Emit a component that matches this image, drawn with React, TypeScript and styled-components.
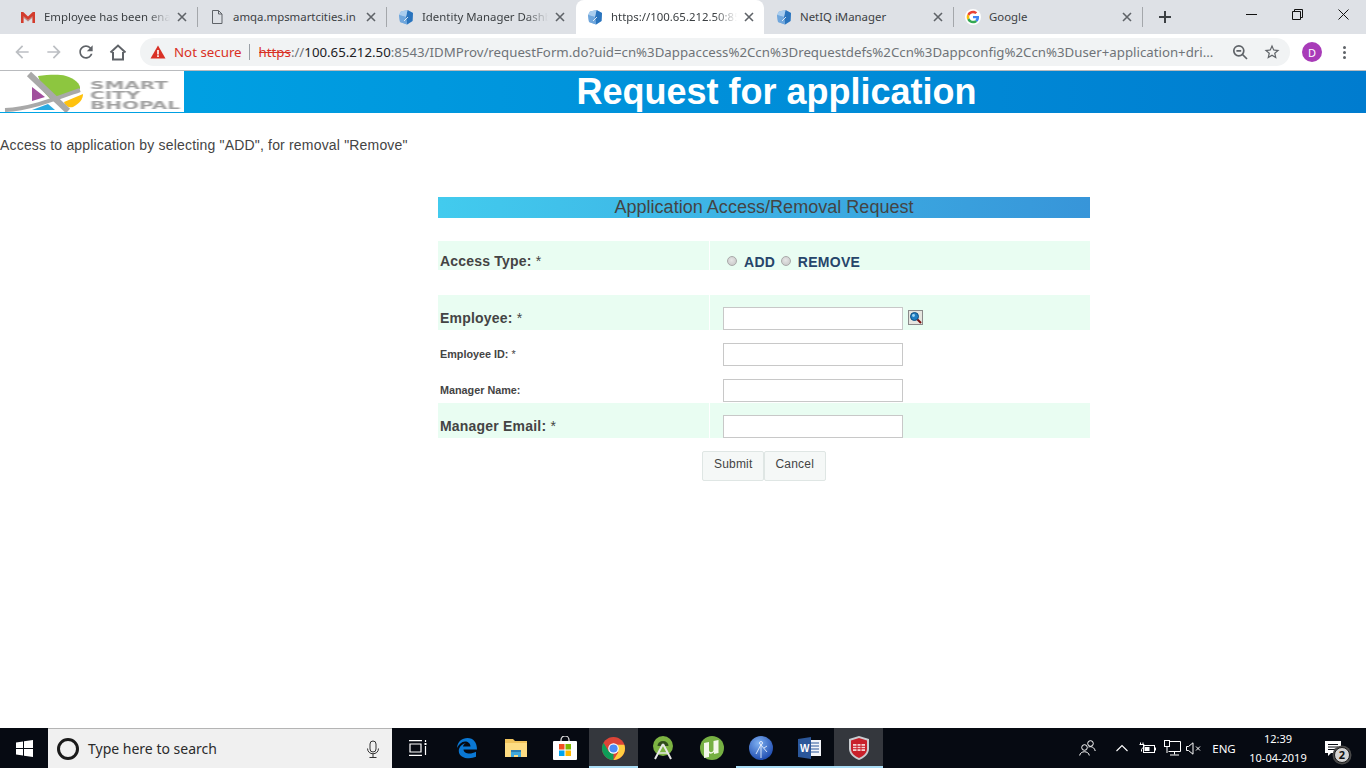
import React from "react";
import styled, { createGlobalStyle } from "styled-components";

const GlobalStyle = createGlobalStyle`
  html, body {
    margin: 0;
    padding: 0;
    background: #fff;
    font-family: "Liberation Sans", Arial, sans-serif;
  }
  * { box-sizing: border-box; }
`;

const Screen = styled.div`
  width: 1366px;
  height: 768px;
  overflow: hidden;
  display: flex;
  flex-direction: column;
`;

/* browser chrome */
const TabStrip = styled.div`
  height: 34px;
  flex: none;
  display: flex;
  align-items: stretch;
  padding: 0 0 0 9px;
  background: #dee1e6;
  font-family: "Noto Sans", "Open Sans", sans-serif;
`;

const Tab = styled.div<{ $active?: boolean }>`
  width: 188px;
  height: 34px;
  display: flex;
  align-items: center;
  padding: 0 9px 0 11px;
  border-radius: 8px 8px 0 0;
  background: ${({ $active }) => ($active ? "#fff" : "transparent")};
`;

const Favicon = styled.span`
  width: 16px;
  height: 16px;
  flex: none;
  display: flex;
  margin-right: 8px;
`;

const TabTitle = styled.span<{ $fade?: boolean }>`
  flex: 1;
  min-width: 0;
  overflow: hidden;
  white-space: nowrap;
  font-size: 11.4px;
  line-height: 16px;
  color: #3c4043;
  ${({ $fade }) =>
    $fade &&
    "mask-image: linear-gradient(90deg, #000 82%, transparent 100%);"}
`;

const TabClose = styled.span`
  width: 12px;
  height: 12px;
  flex: none;
  display: flex;
  margin-left: 6px;
`;

const TabSeparator = styled.span<{ $hidden?: boolean }>`
  width: 1px;
  height: 20px;
  flex: none;
  align-self: center;
  background: ${({ $hidden }) => ($hidden ? "transparent" : "#a4a7ab")};
`;

const NewTab = styled.span`
  width: 14px;
  height: 14px;
  flex: none;
  display: flex;
  align-self: center;
  margin-left: 15px;
`;

const WindowControls = styled.div`
  margin-left: auto;
  display: flex;
  align-items: flex-start;
`;

const WindowButton = styled.span`
  width: 46px;
  height: 28px;
  display: flex;
  align-items: center;
  justify-content: center;
`;

const Toolbar = styled.div`
  height: 37px;
  flex: none;
  display: flex;
  align-items: center;
  padding: 0 0 0 6px;
  background: #fff;
  border-bottom: 1px solid #b9bbbe;
  font-family: "Noto Sans", "Open Sans", sans-serif;
`;

const NavButton = styled.span`
  width: 32px;
  height: 28px;
  flex: none;
  display: flex;
  align-items: center;
  justify-content: center;
`;

const Omnibox = styled.div`
  width: 1150px;
  height: 28px;
  flex: none;
  margin-left: 6px;
  display: flex;
  align-items: center;
  padding: 0 2px 0 10px;
  border-radius: 14px;
  background: #f1f3f4;
`;

const NotSecure = styled.span`
  margin-left: 8px;
  color: #d93025;
  font-size: 13.3px;
  white-space: nowrap;
`;

const OmniDivider = styled.span`
  width: 1px;
  height: 16px;
  flex: none;
  margin: 0 9px 0 7px;
  background: #9aa0a6;
`;

const UrlText = styled.span`
  width: 958px;
  flex: none;
  overflow: hidden;
  white-space: nowrap;
  color: #6f7378;
  font-size: 13.25px;
`;

const UrlScheme = styled.span`
  color: #d93025;
  text-decoration: line-through;
`;

const UrlHost = styled.span`
  color: #202124;
`;

const OmniActions = styled.div`
  margin-left: auto;
  display: flex;
`;

const OmniAction = styled.span`
  width: 32px;
  height: 24px;
  flex: none;
  display: flex;
  align-items: center;
  justify-content: center;
`;

const Avatar = styled.span`
  width: 20px;
  height: 20px;
  flex: none;
  margin-left: 12px;
  border-radius: 50%;
  display: flex;
  align-items: center;
  justify-content: center;
  background: #a83bb8;
  color: #fff;
  font-size: 11px;
`;

const MenuDots = styled.span`
  width: 4px;
  flex: none;
  margin-left: 21px;
  display: flex;
  flex-direction: column;
  gap: 2px;
  i {
    width: 3px;
    height: 3px;
    border-radius: 50%;
    background: #5f6368;
  }
`;

/* page */
const Banner = styled.header`
  height: 42px;
  flex: none;
  display: flex;
  align-items: stretch;
  background: linear-gradient(90deg, #00a5e5 0%, #007ccf 100%);
`;

const LogoBox = styled.div`
  width: 184px;
  flex: none;
  display: flex;
  align-items: flex-start;
  background: #fff;
  margin-bottom: 1px;
`;

const LogoLines = styled.div`
  margin-left: 2px;
  padding-top: 10px;
  display: flex;
  flex-direction: column;
  font-family: "DejaVu Sans", sans-serif;
  font-weight: 700;
  font-size: 10px;
  line-height: 10px;
  color: #a2a2a2;
  filter: blur(0.4px);
  transform: scaleX(2);
  transform-origin: left center;
`;

const BannerTitle = styled.h1`
  flex: 1;
  margin: 0;
  padding-left: 3px;
  text-align: center;
  color: #fff;
  font-size: 36px;
  line-height: 41px;
  font-weight: 700;
`;

const Content = styled.main`
  flex: 1;
  min-height: 0;
  background: #fff;
  color: #444;
`;

const Intro = styled.p`
  margin: 24px 0 0;
  font-size: 14px;
  line-height: 16px;
  letter-spacing: 0.18px;
  color: #444;
`;

const FormPanel = styled.form`
  width: 652px;
  margin: 44px 0 0 438px;
  display: flex;
  flex-direction: column;
`;

const FormHeading = styled.div`
  height: 21px;
  margin-bottom: 23px;
  text-align: center;
  font-size: 18px;
  line-height: 20px;
  letter-spacing: 0.03px;
  color: #444;
  background: linear-gradient(90deg, #42cbee 0%, #3795d9 100%);
`;

const Row = styled.div<{ $compact?: boolean }>`
  height: ${({ $compact }) => ($compact ? 29 : 35)}px;
  margin-bottom: ${({ $compact }) => ($compact ? 25 : 1)}px;
  display: grid;
  grid-template-columns: 271px 1fr;
  column-gap: 1px;
`;

const LabelCell = styled.div<{ $tint?: boolean; $drop?: number }>`
  display: flex;
  align-items: flex-end;
  padding: 0 0 ${({ $drop }) => $drop ?? 4}px 2px;
  background: ${({ $tint }) => ($tint ? "#e9fdf2" : "transparent")};
`;

const FieldCell = styled.div<{ $tint?: boolean }>`
  display: flex;
  align-items: flex-end;
  padding-left: 13px;
  background: ${({ $tint }) => ($tint ? "#e9fdf2" : "transparent")};
`;

const Label = styled.label<{ $small?: boolean }>`
  font-weight: 700;
  font-size: ${({ $small }) => ($small ? 10.8 : 14)}px;
  line-height: 16px;
  color: #444;
  letter-spacing: ${({ $small }) => ($small ? 0 : 0.2)}px;
`;

const Asterisk = styled.span`
  font-weight: 400;
`;

const TextInput = styled.input`
  width: 180px;
  height: 23px;
  padding: 2px 4px;
  border: 1px solid #c8c8c8;
  background: #fff;
  outline: none;
`;

const LookupButton = styled.span`
  width: 15px;
  height: 15px;
  flex: none;
  display: flex;
  margin: 0 0 5px 5px;
`;

const RadioGroup = styled.div`
  display: flex;
  align-items: center;
  height: 20px;
  margin: 0 0 -2px 4px;
`;

const Radio = styled.input`
  appearance: none;
  width: 10px;
  height: 10px;
  margin: 0 7px 2px 0;
  border-radius: 50%;
  border: 1px solid #a9a9a9;
  background: radial-gradient(circle at 45% 40%, #e6e6e6 0%, #c4c4c4 100%);
`;

const RadioLabel = styled.span`
  margin-right: 5.5px;
  font-weight: 700;
  font-size: 14px;
  letter-spacing: 0.3px;
  color: #26456a;
`;

const ButtonBar = styled.div`
  margin-top: 12px;
  display: flex;
  justify-content: center;
`;

const FormButton = styled.button`
  height: 30px;
  padding: 0 10.5px 4px;
  border: 1px solid #dfe6e4;
  border-radius: 2px;
  background: #f5f8f7;
  color: #444;
  font-family: "Liberation Sans", Arial, sans-serif;
  font-size: 12px;
  letter-spacing: 0.2px;
`;

/* taskbar */
const Taskbar = styled.footer`
  height: 40px;
  flex: none;
  display: flex;
  align-items: stretch;
  background: #060a12;
  font-family: "Noto Sans", "Open Sans", sans-serif;
`;

const StartButton = styled.span`
  width: 48px;
  flex: none;
  display: flex;
  align-items: center;
  justify-content: center;
`;

const SearchBox = styled.div`
  width: 344px;
  flex: none;
  display: flex;
  align-items: center;
  margin-right: 1px;
  padding: 0 12px 0 9px;
  background: #f0f0f0;
  border-top: 1px solid #b4b4b4;
`;

const CortanaRing = styled.span`
  width: 22px;
  height: 22px;
  flex: none;
  border: 3px solid #1a1a1a;
  border-radius: 50%;
`;

const SearchText = styled.span`
  flex: 1;
  margin-left: 9px;
  font-size: 14px;
  color: #2b2b2b;
`;

const AppSlot = styled.span<{ $state?: "active" | "open" }>`
  width: 49px;
  flex: none;
  display: flex;
  align-items: center;
  justify-content: center;
  background: ${({ $state }) => ($state === "active" ? "#34373d" : "transparent")};
  box-shadow: ${({ $state }) =>
    $state === "active"
      ? "inset 0 -2px 0 #a9dcf5"
      : $state === "open"
        ? "inset 0 -2px 0 #a9dcf5, inset 4px 0 0 #060a12, inset -4px 0 0 #060a12"
        : "none"};
`;

const Tray = styled.div`
  margin-left: auto;
  padding-right: 14px;
  display: flex;
  align-items: center;
  color: #fff;
`;

const TrayIcon = styled.span<{ $width: number; $gap?: number }>`
  width: ${({ $width }) => $width}px;
  margin-left: ${({ $gap }) => $gap ?? 0}px;
  flex: none;
  display: flex;
  justify-content: center;
`;

const TrayLang = styled.span`
  width: 34px;
  text-align: center;
  font-size: 11.5px;
  margin-left: 4px;
`;

const Clock = styled.div`
  width: 72px;
  margin-left: 1px;
  display: flex;
  flex-direction: column;
  align-items: center;
  font-size: 11px;
  line-height: 19px;
`;

const NotifyWrap = styled.span`
  width: 38px;
  height: 40px;
  flex: none;
  position: relative;
  display: flex;
  align-items: center;
  justify-content: center;
`;

const NotifyBadge = styled.span`
  position: absolute;
  left: 20px;
  top: 19px;
  width: 16px;
  height: 16px;
  border-radius: 50%;
  border: 1px solid #1c1c1c;
  background: #d4d4d4;
  color: #111;
  font-size: 11px;
  font-weight: 700;
  line-height: 14px;
  text-align: center;
  box-shadow: 0 0 0 1.5px #4a4a4a;
`;

/* drawings */
const CubeIcon = () => (
  <svg width="16" height="16" viewBox="0 0 16 16">
    <path d="M3 2.500 9.500 1 15 4l-.5 8-5.500 3.500L2 13 1 6z" fill="#7fb0e0" />
    <path d="M9.500 1 15 4l-.5 8-5.500 3.500L8 8z" fill="#2a74bd" />
    <path d="M3 2.500 9.500 1 8 8 1 6z" fill="#a9cdee" />
    <path d="M1 6l7 2 1 7.500L2 13z" fill="#6fa6dc" />
    <path d="M6 12l4-4" stroke="#fff" strokeWidth="0.8" />
  </svg>
);

const GmailIcon = () => (
  <svg width="16" height="16" viewBox="0 0 16 16">
    <path d="M1 3h2.200L8 7.400 12.800 3H15v11h-2.600V7.200L8 11 3.600 7.200V14H1z" fill="#d33c2d" />
    <path d="M3.600 7.200 8 11l4.400-3.800v1.600L8 12.400 3.600 8.800z" fill="#a52714" opacity=".5" />
  </svg>
);

const PageIcon = () => (
  <svg width="16" height="16" viewBox="0 0 16 16" fill="none" stroke="#5f6368" strokeWidth="1">
    <path d="M3.500 1.500h6l3.500 3.500v9.500h-9.500z" />
    <path d="M9.500 1.500V5H13" />
  </svg>
);

const GoogleIcon = () => (
  <svg width="16" height="16" viewBox="0 0 48 48">
    <circle cx="24" cy="24" r="24" fill="#fff" />
    <g transform="translate(5 5) scale(.79)">
      <path fill="#EA4335" d="M24 9.500c3.540 0 6.710 1.220 9.210 3.600l6.850-6.850C35.900 2.380 30.470 0 24 0 14.620 0 6.510 5.380 2.560 13.220l7.980 6.190C12.430 13.720 17.740 9.500 24 9.500z" />
      <path fill="#4285F4" d="M46.980 24.550c0-1.570-.15-3.090-.38-4.550H24v9.020h12.940c-.58 2.960-2.260 5.480-4.780 7.180l7.730 6c4.510-4.180 7.090-10.360 7.090-17.650z" />
      <path fill="#FBBC05" d="M10.530 28.590c-.48-1.450-.76-2.990-.76-4.590s.27-3.140.76-4.590l-7.980-6.190C.92 16.460 0 20.120 0 24c0 3.880.92 7.540 2.560 10.780l7.970-6.190z" />
      <path fill="#34A853" d="M24 48c6.480 0 11.930-2.130 15.890-5.810l-7.730-6c-2.150 1.450-4.920 2.300-8.160 2.300-6.260 0-11.570-4.220-13.470-9.910l-7.980 6.190C6.510 42.620 14.620 48 24 48z" />
    </g>
  </svg>
);

const CloseGlyph = () => (
  <svg width="12" height="12" viewBox="0 0 12 12" stroke="#5f6368" strokeWidth="1.600">
    <path d="M2 2l8 8M10 2l-8 8" />
  </svg>
);

const MaterialIcon = ({ d, fill, size = 20 }: { d: string; fill: string; size?: number }) => (
  <svg width={size} height={size} viewBox="0 0 24 24" fill={fill}>
    <path d={d} />
  </svg>
);

const ICON_BACK = "M20 11H7.830l5.590-5.590L12 4l-8 8 8 8 1.410-1.410L7.830 13H20v-2z";
const ICON_FORWARD = "M12 4l-1.410 1.410L16.170 11H4v2h12.170l-5.580 5.590L12 20l8-8z";
const ICON_RELOAD =
  "M17.650 6.350C16.200 4.900 14.210 4 12 4c-4.420 0-7.990 3.580-7.990 8s3.570 8 7.990 8c3.730 0 6.840-2.550 7.730-6h-2.080c-.82 2.330-3.040 4-5.650 4-3.310 0-6-2.690-6-6s2.690-6 6-6c1.660 0 3.140.69 4.220 1.780L13 11h7V4l-2.350 2.350z";
const ICON_STAR =
  "M22 9.240l-7.190-.62L12 2 9.190 8.630 2 9.240l5.460 4.730L5.820 21 12 17.270 18.180 21l-1.630-7.030L22 9.240zM12 15.400l-3.760 2.270 1-4.280-3.320-2.880 4.380-.38L12 6.100l1.710 4.040 4.380.38-3.320 2.880 1 4.280L12 15.400z";

const HomeIcon = () => (
  <svg width="18" height="18" viewBox="0 0 18 18" fill="none" stroke="#5f6368" strokeWidth="2">
    <path d="M4 9v7.500h10V9M1.500 9.500 9 2.500l7.500 7" />
  </svg>
);

const WarningIcon = () => (
  <svg width="16" height="16" viewBox="0 0 16 16">
    <path d="M8 1.500 15.500 14.500H.5z" fill="#d93025" />
    <path d="M7.200 6h1.600v4.500H7.200zM7.200 11.300h1.600v1.600H7.200z" fill="#fff" />
  </svg>
);

const ZoomOutIcon = () => (
  <svg width="16" height="16" viewBox="0 0 16 16" fill="none" stroke="#5f6368" strokeWidth="1.700">
    <circle cx="6.800" cy="6.800" r="5" />
    <path d="M10.500 10.500 15 15M4.400 6.800h4.800" />
  </svg>
);

const LogoMark = () => (
  <svg width="88" height="41" viewBox="0 0 88 41">
    <path d="M38 5c10-1 20-2 28 0 8 2 15 8 14 13L52 30 43 20z" fill="#8dc63f" />
    <path d="M32 16v14l13-4z" fill="#a14f9d" />
    <path d="M64 31l19-8c0 5-3 9-10 13-4 1-8-1-9-5z" fill="#ffc20e" />
    <path d="M32 39l16-6 7 6z" fill="#29abe2" />
    <path d="M29 3 68 40" stroke="#a9a9a9" strokeWidth="6" />
    <path d="M5 39c25-1 50-11 75-20" stroke="#a9a9a9" strokeWidth="4" fill="none" />
  </svg>
);

const LookupIcon = () => (
  <svg width="15" height="15" viewBox="0 0 15 15">
    <rect x=".5" y=".5" width="14" height="14" fill="#e6e6e0" stroke="#8a8a8a" />
    <circle cx="6.500" cy="6.500" r="4" fill="#1f7fc4" stroke="#0e4f80" />
    <circle cx="5.500" cy="5.500" r="1.400" fill="#9fd6f5" />
    <path d="M9.500 9.500 13 13" stroke="#7a1010" strokeWidth="2" />
  </svg>
);

const WindowsLogo = () => (
  <svg width="17" height="17" viewBox="0 0 17 17" fill="#fff">
    <path d="M0 2.400 7 1.400v6.600H0zM8 1.300 17 0v8H8zM0 9h7v6.600l-7-1zM8 9h9v8l-9-1.300z" />
  </svg>
);

const MicIcon = () => (
  <svg width="14" height="18" viewBox="0 0 14 18" fill="none" stroke="#333" strokeWidth="1">
    <rect x="4" y="1" width="6" height="11" rx="3" />
    <path d="M1.500 8.500c0 7 11 7 11 0M7 14v3M3.500 17.500h7" />
  </svg>
);

const TaskViewIcon = () => (
  <svg width="18" height="16" viewBox="0 0 18 16" fill="none" stroke="#fff" strokeWidth="1.200">
    <path d="M0 .6h13M0 15.400h13M1 4h11v8H1zM16.500 0v2M16.500 6v9" />
    <rect x="15.500" y="3" width="2" height="2" fill="#fff" stroke="none" />
  </svg>
);

const EdgeIcon = () => (
  <svg width="22" height="22" viewBox="0 0 22 22">
    <path
      d="M1 11C1.500 4.500 6 1 11.500 1 17.500 1 21 5.500 21 12.500H7.500c.3 4 6.500 5.500 12.500 2.300v5C13 23 1 21 3 12c1-3 4-5.500 7-6-2 1-3 2.500-3 3.500h7.500C14.500 6.500 12 4.500 9 4.500 5.500 4.500 3 7.500 1 11z"
      fill="#0a78d4"
    />
  </svg>
);

const ExplorerIcon = () => (
  <svg width="22" height="20" viewBox="0 0 22 20">
    <path d="M0 1h8l2 2h12v16H0z" fill="#f0c35c" />
    <path d="M0 5h22v14H0z" fill="#fddc83" />
    <path d="M6 19v-5h10v5h-3v-2H9v2z" fill="#3fa9dc" />
    <path d="M6 12h10v2H6z" fill="#2d7fb0" />
  </svg>
);

const StoreIcon = () => (
  <svg width="24" height="24" viewBox="0 0 24 24">
    <path d="M8 7V4a4 4 0 0 1 8 0v3" fill="none" stroke="#e8e8e8" strokeWidth="1.200" />
    <rect y="5" width="24" height="19" rx="1" fill="#fff" />
    <rect x="6" y="8" width="5.500" height="5.500" fill="#f25022" />
    <rect x="12.500" y="8" width="5.500" height="5.500" fill="#7fba00" />
    <rect x="6" y="14.500" width="5.500" height="5.500" fill="#00a4ef" />
    <rect x="12.500" y="14.500" width="5.500" height="5.500" fill="#ffb900" />
  </svg>
);

const ChromeIcon = () => (
  <svg width="23" height="23" viewBox="0 0 24 24">
    <circle cx="12" cy="12" r="12" fill="#dc4437" />
    <path d="M12 24A12 12 0 0 1 1.600 6L7 15l5 1z" fill="#0f9d58" />
    <path d="M12 24c6.600 0 12-5.400 12-12 0-1.500-.3-3-.8-4H12l5 8z" fill="#ffcd40" />
    <circle cx="12" cy="12" r="5.500" fill="#fff" />
    <circle cx="12" cy="12" r="4.300" fill="#4c8bf5" />
  </svg>
);

const AndroidStudioIcon = () => (
  <svg width="22" height="24" viewBox="0 0 22 24">
    <circle cx="11" cy="10" r="10" fill="#7cb342" />
    <path d="M5.500 10a5.500 5 0 0 1 11 0z" fill="#2f4a1c" />
    <path d="M11 8 3 23M11 8l8 15" stroke="#e8e8e8" strokeWidth="2" fill="none" />
    <path d="M7 17h8" stroke="#e8e8e8" strokeWidth="1.400" />
  </svg>
);

const TorrentIcon = () => (
  <svg width="24" height="24" viewBox="0 0 24 24">
    <circle cx="12" cy="12" r="12" fill="#76b043" />
    <path d="M4 7l5-1v8c0 3 4 3 4.500 0V5l5-1v13l-4.500 1v-2c-2 2-4 2-5 1v4l-5 1z" fill="#f3f7ea" />
  </svg>
);

const GlobeAppIcon = () => (
  <svg width="24" height="24" viewBox="0 0 24 24">
    <defs>
      <radialGradient id="blueGlobe" cx=".4" cy=".3" r=".8">
        <stop offset="0" stopColor="#7fb1f2" />
        <stop offset="1" stopColor="#1440a8" />
      </radialGradient>
    </defs>
    <circle cx="12" cy="12" r="12" fill="url(#blueGlobe)" />
    <circle cx="12" cy="7" r="1.500" fill="none" stroke="#e8eefc" />
    <path d="M12 8.500V22M12 8.500 7 18M12 9l6 7M15 12l3-2" stroke="#e8eefc" strokeWidth=".9" fill="none" />
  </svg>
);

const WordIcon = () => (
  <svg width="23" height="22" viewBox="0 0 23 22">
    <rect x="8" y="3" width="15" height="16" fill="#f4f6fa" />
    <path d="M13 6h8M13 9h8M13 12h8M13 15h8" stroke="#2b579a" strokeWidth="1.200" />
    <path d="M0 2 13 0v22L0 20z" fill="#2b579a" />
    <text x="2" y="15" fontSize="10" fontWeight="700" fill="#fff" fontFamily="Liberation Sans">W</text>
  </svg>
);

const ShieldIcon = () => (
  <svg width="20" height="24" viewBox="0 0 20 24">
    <path d="M10 0 20 3v10c0 5-5 9-10 11C5 22 0 18 0 13V3z" fill="#c9ccd0" />
    <path d="M10 2 18 4.500V13c0 4-4 7.500-8 9-4-1.500-8-5-8-9V4.500z" fill="#c8202a" />
    <path d="M4 8h12v7H4z" fill="#f4d0d0" />
    <path d="M4 10.300h12M4 12.700h12M8 8v7M12 8v7" stroke="#c8202a" strokeWidth="1" />
  </svg>
);

const PeopleIcon = () => (
  <svg width="17" height="16" viewBox="0 0 17 16" fill="none" stroke="#fff" strokeWidth="1">
    <circle cx="5.500" cy="7.500" r="2.800" />
    <path d="M.7 15.500c.5-5 9-5 9.600 0" />
    <circle cx="11.500" cy="3.500" r="2.800" />
    <path d="M9.500 7c3-1 6 .5 6.700 4" />
  </svg>
);

const ChevronIcon = () => (
  <svg width="12" height="8" viewBox="0 0 12 8" fill="none" stroke="#fff" strokeWidth="1.100">
    <path d="M.5 7 6 1.500 11.500 7" />
  </svg>
);

const BatteryIcon = () => (
  <svg width="17" height="13" viewBox="0 0 17 13" fill="none" stroke="#fff" strokeWidth="1">
    <rect x="4.500" y="3.500" width="11" height="7" />
    <path d="M16.500 5.500v3M1.500.5v2M4 .5v2M.5 2.500h4.500v2c0 1.500-2.500 1.500-2.500 3v2" />
    <rect x="5.500" y="5" width="5" height="4" fill="#fff" stroke="none" />
  </svg>
);

const NetworkIcon = () => (
  <svg width="17" height="16" viewBox="0 0 17 16" fill="none" stroke="#fff" strokeWidth="1">
    <path d="M4.500 1.500h12v10H4.500M10.500 11.500v3M6 15h9" />
    <rect x=".5" y=".5" width="5" height="6" fill="#060a12" />
    <path d="M3 7v6" />
  </svg>
);

const MutedIcon = () => (
  <svg width="15" height="13" viewBox="0 0 15 13" fill="none" stroke="#fff" strokeWidth="1">
    <path d="M.5 4.500h2L7 .8v11.400L2.500 8.500h-2zM10 4.500l4 4M14 4.500l-4 4" />
  </svg>
);

const NotifyIcon = () => (
  <svg width="16" height="15" viewBox="0 0 16 15">
    <path d="M0 0h16v12H6l-3 3v-3H0z" fill="#fff" />
    <path d="M3 3.500h10M3 6h10M3 8.500h7" stroke="#060a12" strokeWidth="1" />
  </svg>
);

const tabs = [
  { title: "Employee has been enabled", icon: <GmailIcon />, fade: true },
  { title: "amqa.mpsmartcities.in", icon: <PageIcon /> },
  { title: "Identity Manager Dashboard", icon: <CubeIcon />, fade: true },
  { title: "https://100.65.212.50:8543/IDMProv", icon: <CubeIcon />, fade: true, active: true },
  { title: "NetIQ iManager", icon: <CubeIcon /> },
  { title: "Google", icon: <GoogleIcon /> },
];

export default function App() {
  return (
    <Screen>
      <GlobalStyle />
      <TabStrip>
        {tabs.map((tab, i) => (
          <React.Fragment key={tab.title}>
            <Tab $active={tab.active}>
              <Favicon>{tab.icon}</Favicon>
              <TabTitle $fade={tab.fade}>{tab.title}</TabTitle>
              <TabClose>
                <CloseGlyph />
              </TabClose>
            </Tab>
            <TabSeparator $hidden={tab.active || tabs[i + 1]?.active} />
          </React.Fragment>
        ))}
        <NewTab>
          <svg width="14" height="14" viewBox="0 0 14 14" stroke="#3c4043" strokeWidth="2">
            <path d="M7 1v12M1 7h12" />
          </svg>
        </NewTab>
        <WindowControls>
          <WindowButton>
            <svg width="11" height="11" viewBox="0 0 11 11" stroke="#111">
              <path d="M0 5.500h11" />
            </svg>
          </WindowButton>
          <WindowButton>
            <svg width="11" height="11" viewBox="0 0 11 11" fill="none" stroke="#111">
              <path d="M.5 2.500h8v8h-8zM2.500 2.500v-2h8v8h-2" />
            </svg>
          </WindowButton>
          <WindowButton>
            <svg width="11" height="11" viewBox="0 0 11 11" stroke="#111">
              <path d="M.5.500l10 10M10.500.500l-10 10" />
            </svg>
          </WindowButton>
        </WindowControls>
      </TabStrip>

      <Toolbar>
        <NavButton>
          <MaterialIcon d={ICON_BACK} fill="#bcbfc3" />
        </NavButton>
        <NavButton>
          <MaterialIcon d={ICON_FORWARD} fill="#bcbfc3" />
        </NavButton>
        <NavButton>
          <MaterialIcon d={ICON_RELOAD} fill="#5f6368" />
        </NavButton>
        <NavButton>
          <HomeIcon />
        </NavButton>
        <Omnibox>
          <WarningIcon />
          <NotSecure>Not secure</NotSecure>
          <OmniDivider />
          <UrlText>
            <UrlScheme>https</UrlScheme>://<UrlHost>100.65.212.50</UrlHost>
            :8543/IDMProv/requestForm.do?uid=cn%3Dappaccess%2Ccn%3Drequestdefs%2Ccn%3Dappconfig%2Ccn%3Duser+application+dri...
          </UrlText>
          <OmniActions>
            <OmniAction>
              <ZoomOutIcon />
            </OmniAction>
            <OmniAction>
              <MaterialIcon d={ICON_STAR} fill="#5f6368" size={18} />
            </OmniAction>
          </OmniActions>
        </Omnibox>
        <Avatar>D</Avatar>
        <MenuDots>
          <i />
          <i />
          <i />
        </MenuDots>
      </Toolbar>

      <Banner>
        <LogoBox>
          <LogoMark />
          <LogoLines>
            <span>SMART</span>
            <span>CITY</span>
            <span>BHOPAL</span>
          </LogoLines>
        </LogoBox>
        <BannerTitle>Request for application</BannerTitle>
      </Banner>

      <Content>
        <Intro>Access to application by selecting "ADD", for removal "Remove"</Intro>
        <FormPanel onSubmit={(e) => e.preventDefault()}>
          <FormHeading>Application Access/Removal Request</FormHeading>

          <Row $compact>
            <LabelCell $tint $drop={1}>
              <Label>
                Access Type: <Asterisk>*</Asterisk>
              </Label>
            </LabelCell>
            <FieldCell $tint>
              <RadioGroup>
                <Radio type="radio" name="accessType" />
                <RadioLabel>ADD</RadioLabel>
                <Radio type="radio" name="accessType" />
                <RadioLabel>REMOVE</RadioLabel>
              </RadioGroup>
            </FieldCell>
          </Row>

          <Row>
            <LabelCell $tint>
              <Label>
                Employee: <Asterisk>*</Asterisk>
              </Label>
            </LabelCell>
            <FieldCell $tint>
              <TextInput type="text" />
              <LookupButton>
                <LookupIcon />
              </LookupButton>
            </FieldCell>
          </Row>

          <Row>
            <LabelCell>
              <Label $small>
                Employee ID: <Asterisk>*</Asterisk>
              </Label>
            </LabelCell>
            <FieldCell>
              <TextInput type="text" />
            </FieldCell>
          </Row>

          <Row>
            <LabelCell>
              <Label $small>Manager Name:</Label>
            </LabelCell>
            <FieldCell>
              <TextInput type="text" />
            </FieldCell>
          </Row>

          <Row>
            <LabelCell $tint>
              <Label>
                Manager Email: <Asterisk>*</Asterisk>
              </Label>
            </LabelCell>
            <FieldCell $tint>
              <TextInput type="text" />
            </FieldCell>
          </Row>

          <ButtonBar>
            <FormButton type="submit">Submit</FormButton>
            <FormButton type="button">Cancel</FormButton>
          </ButtonBar>
        </FormPanel>
      </Content>

      <Taskbar>
        <StartButton>
          <WindowsLogo />
        </StartButton>
        <SearchBox>
          <CortanaRing />
          <SearchText>Type here to search</SearchText>
          <MicIcon />
        </SearchBox>
        <AppSlot>
          <TaskViewIcon />
        </AppSlot>
        <AppSlot>
          <EdgeIcon />
        </AppSlot>
        <AppSlot>
          <ExplorerIcon />
        </AppSlot>
        <AppSlot>
          <StoreIcon />
        </AppSlot>
        <AppSlot $state="active">
          <ChromeIcon />
        </AppSlot>
        <AppSlot>
          <AndroidStudioIcon />
        </AppSlot>
        <AppSlot>
          <TorrentIcon />
        </AppSlot>
        <AppSlot $state="open">
          <GlobeAppIcon />
        </AppSlot>
        <AppSlot $state="open">
          <WordIcon />
        </AppSlot>
        <AppSlot $state="active">
          <ShieldIcon />
        </AppSlot>
        <Tray>
          <TrayIcon $width={24}>
            <PeopleIcon />
          </TrayIcon>
          <TrayIcon $width={24} $gap={11}>
            <ChevronIcon />
          </TrayIcon>
          <TrayIcon $width={27}>
            <BatteryIcon />
          </TrayIcon>
          <TrayIcon $width={22}>
            <NetworkIcon />
          </TrayIcon>
          <TrayIcon $width={20}>
            <MutedIcon />
          </TrayIcon>
          <TrayLang>ENG</TrayLang>
          <Clock>
            <span>12:39</span>
            <span>10-04-2019</span>
          </Clock>
          <NotifyWrap>
            <NotifyIcon />
            <NotifyBadge>2</NotifyBadge>
          </NotifyWrap>
        </Tray>
      </Taskbar>
    </Screen>
  );
}
